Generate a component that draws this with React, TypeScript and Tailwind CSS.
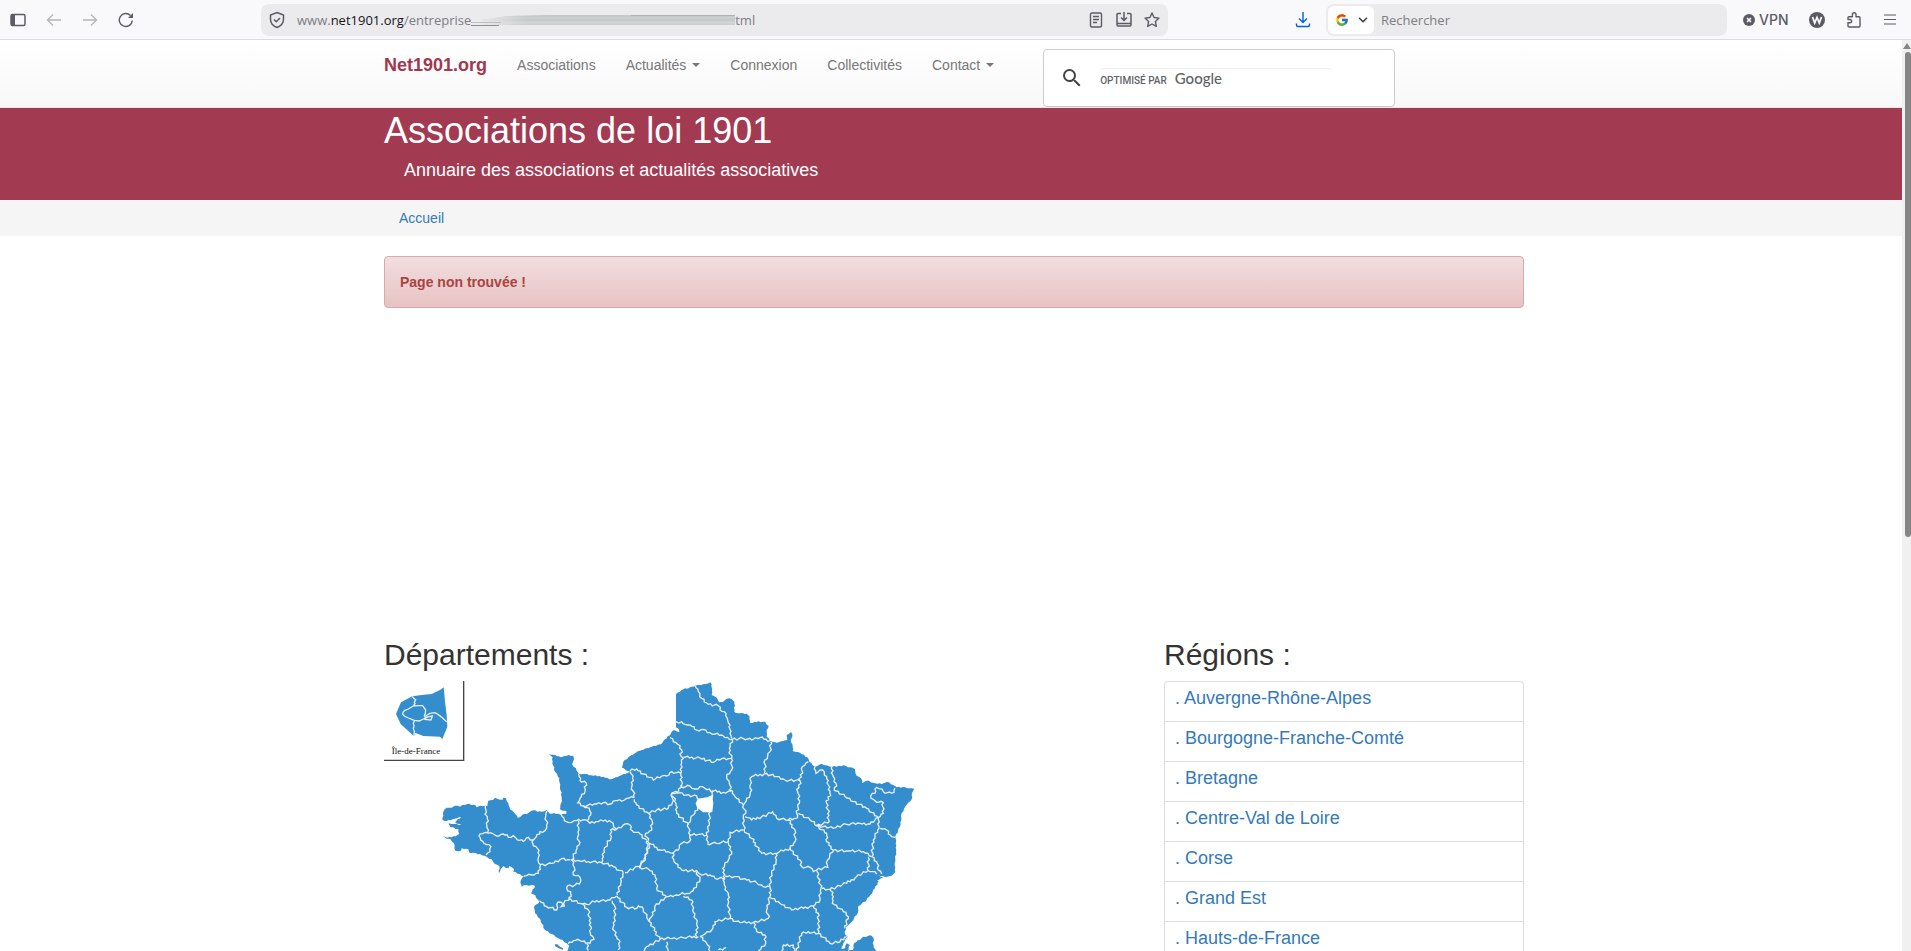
import { ChevronDown } from "lucide-react";
import { FcGoogle } from "react-icons/fc";
import { MdSearch } from "react-icons/md";

const regions = [
  "Auvergne-Rhône-Alpes",
  "Bourgogne-Franche-Comté",
  "Bretagne",
  "Centre-Val de Loire",
  "Corse",
  "Grand Est",
  "Hauts-de-France",
];

const navLinks = [
  { label: "Associations", dropdown: false },
  { label: "Actualités", dropdown: true },
  { label: "Connexion", dropdown: false },
  { label: "Collectivités", dropdown: false },
  { label: "Contact", dropdown: true },
];

const westLand =
  "840,343 810,352 780,362 750,380 733,395 726,412 750,423 748,430 720,438 690,450 670,440 640,437 615,432 596,432 588,415 576,403 582,388 580,377 560,377 543,382 507,371 518,382 517,400 525,425 538,445 540,470 545,500 543,520 540,538 547,542 559,543 559,552 510,551 500,540 485,545 460,541 435,552 413,563 403,548 390,538 385,520 378,505 370,503 368,509 355,508 345,503 340,509 335,510 325,512 322,528 300,527 290,532 280,524 262,522 240,530 225,527 215,533 200,533 190,545 188,570 200,573 225,566 243,561 225,577 244,585 215,582 205,580 212,592 235,597 238,612 215,622 188,621 212,628 222,640 226,662 243,662 245,655 265,658 268,668 280,668 300,672 320,680 335,688 340,697 358,708 357,730 362,718 370,708 385,715 388,708 402,717 400,725 432,738 422,752 425,770 440,765 465,768 453,790 466,796 478,815 462,830 465,850 478,865 493,898 515,912 540,928 560,940 568,948 560,965 840,965";

const eastLand =
  "0,320 35,328 65,315 90,305 66,293 70,275 90,258 120,243 178,225 200,205 222,180 238,187 237,178 228,172 228,73 250,58 285,47 315,42 331,37 336,55 335,75 350,83 357,97 370,95 380,86 395,88 403,95 403,125 415,130 440,131 449,140 450,158 470,156 495,155 506,168 500,180 500,200 510,212 530,218 550,213 562,210 560,195 573,186 577,200 572,210 578,225 578,243 600,248 622,262 628,275 645,290 665,281 690,290 710,290 730,286 750,292 765,298 768,315 783,325 787,340 800,332 825,340 845,342 860,336 880,345 890,352 915,352 943,357 936,370 935,388 915,410 905,430 900,470 886,500 889,540 884,580 886,605 875,617 855,621 835,615 850,622 830,632 836,632 825,655 800,690 775,708 773,730 755,755 738,770 735,793 743,800 730,820 725,838 735,835 740,820 750,825 745,843 758,840 762,820 790,800 815,797 822,810 818,820 828,843 0,843";

const westBorders = [
  "316,527 318,540 315,552 322,560 320,585 325,600 323,608 300,612 302,630 312,640 333,650 330,665 318,675",
  "323,610 340,612 350,618 370,612 385,622 400,617 412,630 430,634 445,622 460,630",
  "500,543 497,560 500,585 495,602 480,605 465,625 460,630",
  "460,630 460,648 472,655 478,675 474,690 482,705 475,730 455,735 432,738",
  "480,705 515,700 545,686 570,690",
  "543,552 553,572 567,578 590,572 608,570 622,572",
  "595,572 597,600 593,620 597,645 588,662 575,690",
  "596,432 600,452 618,458 615,485 600,505 593,518 610,528 628,535 632,555 622,572",
  "610,528 650,522 670,518 690,522 705,512 725,514 740,505 762,503",
  "622,572 630,580 655,575 670,573 688,572 700,580 702,592 710,598",
  "710,598 692,600 693,625 682,640 672,660 670,680 665,698",
  "572,690 600,693 625,695 665,698 700,710 730,728",
  "575,690 583,712 580,735 600,742 602,755 585,765 562,768 560,775 572,785 568,810",
  "565,808 600,820 620,823 650,812 690,810 710,798",
  "478,812 500,830 530,840 533,817 545,817 543,830 553,828 555,812 568,810",
  "608,823 625,840 627,860 633,890 632,915 642,928 630,940 600,932 580,932 565,942",
  "620,940 625,962",
  "697,812 705,830 703,860 700,890 710,920 720,935 715,960",
  "730,728 722,760 712,795",
  "710,798 740,832 770,835 775,828 790,838 800,862 808,875",
  "710,598 735,582 750,585 757,602 780,612 800,630",
  "800,632 803,650 797,680 775,710 735,728",
];

const eastBorders = [
  "90,305 98,325 95,350 103,383",
  "90,303 110,297 130,312 160,330 185,318 200,318 215,305 243,310",
  "210,203 228,218 245,240 243,258 250,265 243,285 243,310",
  "228,155 245,155 255,163 270,165 290,180 310,178 330,188 345,192 365,195 375,203 397,208",
  "285,47 295,65 305,85 325,103 355,107 360,120 378,130 383,150 390,165 390,190 395,205",
  "397,208 430,206 455,210 480,203 510,212",
  "250,262 300,264 340,277 365,266 393,265",
  "397,208 388,235 395,265 395,300 380,320 388,340 392,365",
  "243,310 247,340 243,350 270,348 285,357 300,350 315,355 340,363 370,367 398,363",
  "243,345 232,368 215,370",
  "215,368 240,368 260,375 290,378 300,388",
  "215,370 217,398 200,418 170,420 145,430",
  "513,215 510,245 495,270 493,310",
  "450,345 455,320 493,312 530,320 555,330 600,333",
  "600,333 607,290 625,275",
  "450,345 455,360 450,375 435,398 430,405",
  "398,363 405,380 430,405 437,430 430,445 432,480",
  "435,440 455,450 485,440 518,425 530,445 565,450 590,445",
  "600,333 593,365 598,400 590,430 592,445",
  "645,290 648,310 668,300 680,320 690,370 680,400 688,455",
  "595,430 630,450 650,467 688,455",
  "695,290 700,320 708,340 703,360 735,380 760,395 800,415 835,443",
  "650,467 700,475 740,463 780,460 810,462 835,443",
  "885,355 875,370 850,365 830,352 825,370 812,377 825,392 850,398 850,430 835,443",
  "835,443 837,475 820,510 815,560",
  "840,475 860,480 875,500 886,502",
  "650,467 680,490 680,515 700,540",
  "700,540 745,543 790,545 815,560",
  "815,560 830,575 835,600 845,612",
  "805,562 803,600 830,612",
  "803,603 770,620 740,640 690,658 665,655",
  "700,540 683,570 683,592 650,600 655,625 663,655",
  "565,450 585,480 585,515 570,535",
  "570,535 600,570 605,590 630,592 640,605 650,600",
  "432,480 455,505 485,550 525,550 570,535",
  "527,550 528,575 515,610 510,650",
  "430,480 390,487 385,515 350,520 322,522",
  "338,362 335,385",
  "330,425 328,465 320,495 325,520",
  "293,412 280,435 265,460 270,495 300,493 320,495",
  "215,370 228,400 230,430 265,465",
  "145,430 157,455 155,480 137,490 148,520 180,540 210,548 235,540 245,520 268,515 270,495",
  "220,548 222,575 245,600 290,602 300,612 330,615 345,625 375,625",
  "385,517 395,545 385,570 368,595 375,625",
  "375,618 410,620 440,630 470,638 490,650 510,650",
  "103,388 110,405 145,430",
  "148,520 140,550 130,575 118,595",
  "120,593 145,597 165,615 170,655 200,680",
  "200,680 165,708 155,740 148,755",
  "200,680 230,675 260,670 280,662 300,628 290,605",
  "250,680 275,690 278,720 290,760 290,800",
  "148,755 180,808 210,805 250,803 295,800",
  "180,808 140,830 133,843",
  "375,625 373,645 385,670 385,700 390,745",
  "300,800 310,795 335,780 345,755 390,745",
  "510,650 510,680 500,720 505,745 460,757 420,758 390,745",
  "510,683 540,700 575,720 640,708",
  "663,655 660,690 640,708",
  "690,658 700,680 697,700 730,725 745,740 735,775",
  "640,708 655,730 655,790 625,785 605,790 590,843",
  "655,790 690,820 720,815 740,800",
  "460,757 470,785 495,795 497,820 485,830 475,843",
  "545,843 550,825 580,825 585,843",
  "300,800 320,820 330,843",
  "355,840 378,832",
  "205,843 200,815",
];

// Splits long segments and nudges the new points, so borders look surveyed rather than ruled
const roughen = (line: string, amount: number) => {
  const points = line.split(" ").map(p => p.split(",").map(Number));
  const out: string[] = [];
  points.forEach(([x, y], i) => {
    out.push(`${x},${y}`);
    const next = points[i + 1];
    if (!next) return;
    const dx = next[0] - x;
    const dy = next[1] - y;
    const length = Math.hypot(dx, dy);
    // straight cuts along the bottom and sides of the drawing
    if (length > 95) return;
    const steps = Math.floor(length / 6);
    for (let s = 1; s < steps; s++) {
      const shift = (((x * 7 + y * 13 + s * 29) % 11) / 5 - 1) * amount;
      const px = x + (dx * s) / steps - (dy / length) * shift;
      const py = y + (dy * s) / steps + (dx / length) * shift;
      out.push(`${Math.round(px)},${Math.round(py)}`);
    }
  });
  return out.join(" ");
};

const FranceMap = () => (
  <svg viewBox="0 0 2250 810" className="block w-full" role="img" aria-label="Carte des départements">
    <g transform="translate(-12 -153)">
      <polygon points={roughen(westLand, 2)} fill="#348dcd" />
      <path d="M524 943l8 0 8 7 10 5-2 4-12-4-10-6z" fill="#348dcd" />
    </g>
    <g transform="translate(648 -33)">
      <polygon points={roughen(eastLand, 2)} fill="#348dcd" />
    </g>
    <g transform="translate(-12 -153)" fill="none" stroke="#e9eef2" strokeWidth="4">
      {westBorders.map(line => (
        <polyline key={line} points={roughen(line, 4)} />
      ))}
    </g>
    <g transform="translate(648 -33)" fill="none" stroke="#e9eef2" strokeWidth="4">
      {eastBorders.map(line => (
        <polyline key={line} points={roughen(line, 4)} />
      ))}
      <polygon points="295,388 320,384 335,378 338,400 335,425 310,425 293,412 289,400" fill="#fff" stroke="#fff" />
    </g>
    <g transform="translate(-12 -153)">
      <polygon
        points="191,172 180,180 155,192 125,195 97,199 63,217 48,252 62,282 98,315 103,318 105,308 130,318 180,320 187,327 202,290 200,255 195,215"
        fill="#348dcd"
      />
      <g fill="none" stroke="#e9eef2" strokeWidth="4">
        <path d="M97 199l4 6 6 4-4 8 2 4-5 7 14-1 14 0 9 13-1 10-3 8 5 6-8 3-12 6-15-2-18-7-12-6-5-5 2-8 5-4 10-4 15-9" />
        <path d="M103 272l-3 8 2 8-2 8 3 8-1 14M137 258l13-8 15-2 10 6 12 9 13 12M138 262l19-4-4 12-18-2z" />
      </g>
      <path d="M251 153V391H12" fill="none" stroke="#444" strokeWidth="4" />
      <text x="35" y="372" fontSize="27" fill="#111" style={{ fontFamily: '"Liberation Serif", serif' }}>
        Île-de-France
      </text>
    </g>
  </svg>
);

const BrowserBar = () => (
  <div className="flex h-10 shrink-0 items-center border-b border-[#dddde0] bg-[#f9f9fb] pb-1 pt-1 font-['Open_Sans',sans-serif] text-[13px] text-[#5b5b66]">
    <div className="flex w-[261px] items-center gap-5 pl-[10px]">
      <button aria-label="Panneau latéral">
        <svg width="16" height="16" viewBox="0 0 16 16">
          <rect x="1" y="2.5" width="14" height="11" rx="1.5" fill="none" stroke="currentColor" strokeWidth="1.5" />
          <path d="M1 3h4v10H1z" fill="currentColor" />
        </svg>
      </button>
      <button aria-label="Page précédente" className="text-[#b4b4b9]">
        <svg width="16" height="16" viewBox="0 0 16 16" fill="none" stroke="currentColor" strokeWidth="1.4">
          <path d="M15 8H2M7 2.5L1.5 8 7 13.5" />
        </svg>
      </button>
      <button aria-label="Page suivante" className="text-[#b4b4b9]">
        <svg width="16" height="16" viewBox="0 0 16 16" fill="none" stroke="currentColor" strokeWidth="1.4">
          <path d="M1 8h13M9 2.5L14.5 8 9 13.5" />
        </svg>
      </button>
      <button aria-label="Actualiser">
        <svg width="16" height="16" viewBox="0 0 16 16" fill="none" stroke="currentColor" strokeWidth="1.4">
          <path d="M14.3 8.5A6.5 6.5 0 1 1 12.5 3.5" />
          <path d="M15 1v5h-5z" fill="currentColor" stroke="none" />
        </svg>
      </button>
    </div>

    <div className="flex h-8 flex-[907_1_907px] items-center rounded-lg bg-[#ebebed] px-2">
      <svg width="16" height="18" viewBox="0 0 16 18" fill="none" stroke="currentColor" strokeWidth="1.5">
        <path d="M8 1.5L14.5 4v4c0 4-2.7 7-6.5 8.5C4.2 15 1.5 12 1.5 8V4z" />
        <path d="M5 8.5l2.3 2.3L11 7" />
      </svg>
      <div className="flex items-center whitespace-nowrap pl-3 pt-0.5 text-[#7d7d83]">
        <span>www.</span>
        <span className="text-[#15141a]">net1901.org</span>
        <span>/entreprise</span>
        <svg width="264" height="14" viewBox="0 0 264 14" aria-hidden="true">
          <defs>
            <linearGradient id="smear" x1="0" x2="0" y1="0" y2="1">
              <stop offset="0" stopColor="#c2c3c4" />
              <stop offset="0.3" stopColor="#cfd0d1" />
              <stop offset="0.5" stopColor="#c6c7c8" />
              <stop offset="0.75" stopColor="#d3d4d5" />
              <stop offset="1" stopColor="#cbccce" />
            </linearGradient>
            <linearGradient id="fade" x1="0" x2="1" y1="0" y2="0">
              <stop offset="0" stopColor="#ebebed" stopOpacity="0.9" />
              <stop offset="0.18" stopColor="#ebebed" stopOpacity="0" />
            </linearGradient>
          </defs>
          <path d="M10 6L36 2l40-1h188v10H10z" fill="url(#smear)" />
          <path d="M10 6L36 2l40-1h188v10H10z" fill="url(#fade)" />
          <path d="M0 8.5h30" stroke="#bebfc1" />
          <path d="M0 11.5h28" stroke="#8f9092" />
          <path d="M160 1.5h104" stroke="#b0b1b3" />
        </svg>
        <span>tml</span>
      </div>
      <div className="ml-auto flex items-center gap-3">
        <button aria-label="Mode lecture">
          <svg width="16" height="16" viewBox="0 0 16 16" fill="none" stroke="currentColor" strokeWidth="1.4">
            <rect x="2.5" y="1" width="11" height="14" rx="1.5" />
            <path d="M5 4.5h6M5 7.5h6M5 10.5h4" />
          </svg>
        </button>
        <button aria-label="Installer">
          <svg width="16" height="16" viewBox="0 0 16 16" fill="none" stroke="currentColor" strokeWidth="1.5">
            <path d="M5 1.5H2a1 1 0 0 0-1 1V13a1 1 0 0 0 1 1h12a1 1 0 0 0 1-1V2.5a1 1 0 0 0-1-1h-3M1 11.5h14M8 0v8M5 5.500l3 3 3-3" />
          </svg>
        </button>
        <button aria-label="Marquer cette page">
          <svg width="16" height="16" viewBox="0 0 16 16" fill="none" stroke="currentColor" strokeWidth="1.4" strokeLinejoin="round">
            <path d="M8 1l2.1 4.5 4.9.6-3.6 3.4.9 4.9L8 12l-4.3 2.4.9-4.9L1 6.1l4.9-.6z" />
          </svg>
        </button>
      </div>
    </div>

    <div className="flex w-[158px] justify-end pr-[15px]">
      <button aria-label="Téléchargements" className="text-[#0061e0]">
        <svg width="16" height="16" viewBox="0 0 16 16" fill="none" stroke="currentColor" strokeWidth="1.4">
          <path d="M8 0v10.500M4 6.500l4 4 4-4M1.500 11.500V13a1.500 1.500 0 0 0 1.500 1.500h10a1.500 1.500 0 0 0 1.500-1.500v-1.500" />
        </svg>
      </button>
    </div>

    <div className="flex h-8 flex-[401_1_401px] items-center rounded-lg bg-[#ebebed] pl-0.5">
      <button aria-label="Moteur de recherche" className="flex h-7 w-[46px] items-center justify-between rounded-md bg-white pl-[7px] pr-1">
        <FcGoogle size={14} />
        <ChevronDown size={14} strokeWidth={2.5} color="#3a3944" />
      </button>
      <input
        aria-label="Rechercher"
        placeholder="Rechercher"
        className="ml-[7px] min-w-0 flex-1 bg-transparent pt-0.5 outline-none placeholder:text-[#7d7d83]"
      />
    </div>

    <div className="flex w-[184px] items-center justify-between pl-4 pr-[13px]">
      <button className="flex items-center gap-1 font-['Inter',sans-serif] text-sm font-medium">
        <svg width="12" height="12" viewBox="0 0 12 12">
          <circle cx="6" cy="6" r="6" fill="currentColor" />
          <path d="M4 4l4 4M8 4L4 8" stroke="#fff" strokeWidth="1.5" />
        </svg>
        VPN
      </button>
      <button aria-label="Extension W">
        <svg width="16" height="16" viewBox="0 0 16 16">
          <circle cx="8" cy="8" r="8" fill="currentColor" />
          <path d="M3.5 5l2.2 6L8 5.5 10.3 11l2.2-6" fill="none" stroke="#fff" strokeWidth="1.7" />
        </svg>
      </button>
      <button aria-label="Extensions">
        <svg width="16" height="16" viewBox="0 0 16 16" fill="none" stroke="currentColor" strokeWidth="1.4" strokeLinejoin="round">
          <path d="M2 10.800V14a1 1 0 0 0 1 1h10a1 1 0 0 0 1-1V5.800a1 1 0 0 0-1-1h-3V2.500a1.800 1.800 0 0 0-3.600 0v2.300H3a1 1 0 0 0-1 1v1.700h2a1.650 1.650 0 0 1 0 3.300z" />
        </svg>
      </button>
      <button aria-label="Menu">
        <svg width="16" height="16" viewBox="0 0 16 16" fill="none" stroke="currentColor" strokeWidth="1.2">
          <path d="M2 3h12M2 7.500h12M2 12h12" />
        </svg>
      </button>
    </div>
  </div>
);

const Navbar = () => (
  <nav className="border-b border-[#e7e7e7] bg-linear-to-b from-white to-[#f8f8f8] pl-1.5">
    <div className="mx-auto flex h-[67px] max-w-[1140px] items-start">
      <a href="#" className="mr-[15px] pt-[15px] text-lg leading-5 font-bold text-[#a03850]">
        Net1901.org
      </a>
      <ul className="flex text-sm leading-5 text-[#777]">
        {navLinks.map(({ label, dropdown }) => (
          <li key={label}>
            <a href="#" className="flex items-center px-[15px] pt-[15px]">
              {label}
              {dropdown && (
                <span className="ml-1.5 border-x-4 border-t-4 border-x-transparent border-t-[#777]" />
              )}
            </a>
          </li>
        ))}
      </ul>
      <form className="mt-[9px] ml-[34px] flex h-[58px] w-[352px] items-center rounded border border-[#ccc] bg-white pl-4">
        <button type="button" aria-label="Rechercher">
          <MdSearch size={24} color="#444" />
        </button>
        <label className="relative ml-4 flex w-[232px] items-baseline gap-2 rounded-t border-t border-[#eee] text-[#5f6368]">
          <span className="font-['Roboto',sans-serif] text-[10px] font-medium">OPTIMISÉ PAR</span>
          <span className="font-['Lato',sans-serif] text-[15px] leading-[18px] font-medium">Google</span>
          <input aria-label="Recherche Google" className="absolute inset-0 bg-transparent outline-none" />
        </label>
      </form>
    </div>
  </nav>
);

const App = () => {
  return (
    <div className="flex h-screen flex-col overflow-hidden bg-white font-['Liberation_Sans',Arial,sans-serif] text-[#333]">
      <BrowserBar />
      <div className="flex min-h-0 flex-1">
        <div className="min-w-0 flex-1 overflow-hidden">
          <Navbar />
          <header className="h-[92px] bg-[#a23a52] pt-[3px] pl-1.5 text-white">
            <div className="mx-auto max-w-[1140px]">
              <h1 className="text-4xl leading-10">Associations de loi 1901</h1>
              <p className="mt-[9px] pl-5 text-lg leading-5">Annuaire des associations et actualités associatives</p>
            </div>
          </header>
          <div className="bg-[#f5f5f5] py-2 pl-1.5 text-sm leading-5">
            <div className="mx-auto max-w-[1140px] pl-[15px]">
              <a href="#" className="text-[#337ab7]">Accueil</a>
            </div>
          </div>
          <main className="pt-5 pl-1.5">
            <div className="mx-auto max-w-[1140px]">
              <div
                role="alert"
                className="rounded border border-[#dca7a7] bg-linear-to-b from-[#f2dede] to-[#e7c3c3] p-[15px] text-sm leading-5 font-bold text-[#a94442]"
              >
                Page non trouvée !
              </div>
              <div className="mt-[330px] flex gap-[30px]">
                <section className="min-w-0 flex-1">
                  <h2 className="mb-2.5 text-3xl leading-[33px]">Départements :</h2>
                  <FranceMap />
                </section>
                <section className="w-[360px]">
                  <h2 className="mb-2.5 text-3xl leading-[33px]">Régions :</h2>
                  <ul className="rounded-t border-x border-t border-[#ddd]">
                    {regions.map(region => (
                      <li key={region} className="h-10 border-b border-[#ddd] px-2.5 pt-1.5 text-lg leading-5">
                        <a href="#" className="text-[#337ab7]">. {region}</a>
                      </li>
                    ))}
                  </ul>
                </section>
              </div>
            </div>
          </main>
        </div>
        <div className="flex w-[9px] flex-col items-end bg-[#f0f0f0] pt-[3px]" aria-hidden="true">
          <span className="mb-[3px] border-x-4 border-b-[6px] border-x-transparent border-b-[#858585]" />
          <div className="flex-1">
            <div className="h-[54%] w-1.5 rounded-full bg-[#858585]" />
          </div>
        </div>
      </div>
    </div>
  );
};

export default App;
